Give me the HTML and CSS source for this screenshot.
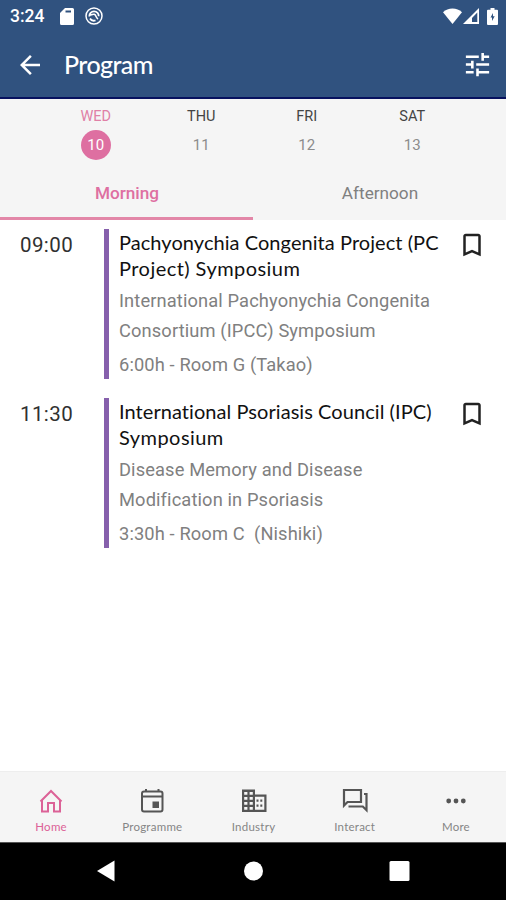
FILE: index.html
```html
<!DOCTYPE html>
<html lang="en">
<head>
    <meta charset="UTF-8">
    <meta name="viewport" content="width=device-width, initial-scale=1.0">
    <title>Program</title>
    <link rel="stylesheet" href="styles.css">
</head>
<body>
    <header class="header">
        <div class="status-bar">
            <span class="status-time">3:24</span>
            <svg width="14" height="17" viewBox="0 0 14 17"><path fill="#fff" fill-rule="evenodd" d="M5 0h7.500q1.500 0 1.500 1.500v14q0 1.500-1.500 1.500h-11q-1.500 0-1.500-1.500V5zM5.500 2.500v2h5.500v-2z"/></svg>
            <svg class="status-sync" width="18" height="18" viewBox="0 0 18 18" fill="none" stroke="#fff"><circle cx="9" cy="9" r="8" stroke-width="1.500"/><path stroke-width="1.800" d="M4.300 9.500C4 6.500 6.500 4.300 9 4.300c3 0 4.900 2.300 4.700 4.900M5 11.500c1.200 2 3.500 2.600 5.500 1.900"/><path stroke-width="1.600" d="M4.500 7.500c2 1.300 3.200-.8 4.800-.2 2 .8 1.200 3.200 3.700 4.700"/></svg>
            <div class="status-right">
                <svg width="19" height="16" viewBox="0 0 19 16"><path fill="#fff" d="M9.500 16L0 4.200Q4 .5 9.500.5T19 4.200z"/></svg>
                <svg width="16" height="16" viewBox="0 0 16 16"><path fill="#fff" fill-rule="evenodd" d="M16 0v16H0zM14.300 4.500L9 10v4h5.300z"/></svg>
                <svg class="status-battery" width="11" height="17" viewBox="0 0 11 17"><path fill="#fff" fill-rule="evenodd" d="M3.500 0h4v1.700H10q1 0 1 1V16q0 1-1 1H1q-1 0-1-1V2.700q0-1 1-1h2.500zM6 5L3.500 9.500H5v3.500l2.700-4.700H6z"/></svg>
            </div>
        </div>
        <div class="toolbar">
            <svg width="30" height="30" viewBox="0 0 24 24"><path fill="#fff" d="M20 11H7.830l5.590-5.590L12 4l-8 8 8 8 1.410-1.410L7.830 13H20v-2z"/></svg>
            <h1 class="title">Program</h1>
            <svg class="filter" width="31" height="31" viewBox="0 0 24 24"><path fill="#fff" d="M3 17v2h6v-2H3zM3 5v2h10V5H3zm10 16v-2h8v-2h-8v-2h-2v6h2zM7 9v2H3v2h4v2h2V9H7zm14 4v-2H11v2h10zm-6-4h2V7h4V5h-4V3h-2v6z"/></svg>
        </div>
    </header>

    <div class="days">
        <div class="day day-active"><span class="day-name">WED</span><span class="day-number">10</span></div>
        <div class="day"><span class="day-name">THU</span><span class="day-number">11</span></div>
        <div class="day"><span class="day-name">FRI</span><span class="day-number">12</span></div>
        <div class="day"><span class="day-name">SAT</span><span class="day-number">13</span></div>
    </div>
    <div class="tabs">
        <div class="tab tab-active">Morning</div>
        <div class="tab">Afternoon</div>
    </div>

    <main class="sessions">
        <div class="session">
            <div class="session-time">09:00</div>
            <div class="session-info">
                <h2 class="session-title">Pachyonychia Congenita Project (PC<br><span class="title-wide">Project) Symposium</span></h2>
                <p class="session-text">International Pachyonychia Congenita<br>Consortium (IPCC) Symposium</p>
                <p class="session-room">6:00h - Room G (Takao)</p>
            </div>
            <svg class="bookmark" width="30" height="30" viewBox="0 0 24 24"><path d="M17 3H7c-1.100 0-1.990.9-1.990 2L5 21l7-3 7 3V5c0-1.100-.9-2-2-2zm0 15l-5-2.180L7 18V5h10v13z"/></svg>
        </div>
        <div class="session">
            <div class="session-time">11:30</div>
            <div class="session-info">
                <h2 class="session-title">International Psoriasis Council (IPC)<br><span class="title-wide">Symposium</span></h2>
                <p class="session-text">Disease Memory and Disease<br>Modification in Psoriasis</p>
                <p class="session-room">3:30h - Room C&nbsp; (Nishiki)</p>
            </div>
            <svg class="bookmark" width="30" height="30" viewBox="0 0 24 24"><path d="M17 3H7c-1.100 0-1.990.9-1.990 2L5 21l7-3 7 3V5c0-1.100-.9-2-2-2zm0 15l-5-2.180L7 18V5h10v13z"/></svg>
        </div>
    </main>

    <nav class="menu">
        <div class="menu-item menu-active">
            <svg width="28" height="28" viewBox="0 0 28 28" fill="none" stroke="currentColor" stroke-width="2"><path d="M3.500 14.500L14 4l10.500 10.500M5 13v11.500h6V16h6v8.500h6V13"/></svg>
            <span>Home</span>
        </div>
        <div class="menu-item">
            <svg width="28" height="28" viewBox="0 0 28 28" fill="none" stroke="currentColor" stroke-width="2"><rect x="4" y="4.500" width="20.500" height="20" rx="2"/><path d="M4 9.500h20.500M8 2v3M20.500 2v3"/><path d="M14.500 14.500H21v6.500h-6.500z" fill="currentColor" stroke="none"/></svg>
            <span>Programme</span>
        </div>
        <div class="menu-item">
            <svg width="28" height="28" viewBox="0 0 28 28" fill="currentColor"><path fill-rule="evenodd" d="M2 2.500h13v5h11.500V25H2zM4.200 5v2.800h3.200V5zM9.600 5v2.800h3.200V5zM4.200 10v2.800h3.200V10zM9.600 10v2.800h3.200V10zM4.200 15v2.800h3.200V15zM9.600 15v2.800h3.200V15zM4.200 20v2.800h3.200V20zM9.600 20v2.800h3.200V20zM15 9.700v13.100h9.300V9.700z"/><path d="M16.500 12.500h2v2.200h-2zM20.300 12.500h2v2.200h-2zM16.500 17.500h2v2.200h-2zM20.300 17.500h2v2.200h-2z"/></svg>
            <span>Industry</span>
        </div>
        <div class="menu-item">
            <svg width="28" height="28" viewBox="0 0 28 28" fill="none" stroke="currentColor" stroke-width="2.200"><path d="M3 3h17v12H6.500L3 18.500z"/><path d="M7.500 19.500h14.300l3.700 3.700V7H23"/></svg>
            <span>Interact</span>
        </div>
        <div class="menu-item">
            <svg width="28" height="28" viewBox="0 0 28 28" fill="currentColor"><circle cx="6.700" cy="14" r="2.400"/><circle cx="14" cy="14" r="2.400"/><circle cx="21.300" cy="14" r="2.400"/></svg>
            <span>More</span>
        </div>
    </nav>
    <div class="system-bar">
        <svg width="506" height="57" viewBox="0 0 506 57" fill="#fff"><path d="M97 28L114.500 17.500v21z"/><circle cx="253.500" cy="28" r="9.500"/><rect x="389.500" y="18" width="20" height="20" rx="1.500"/></svg>
    </div>
</body>
</html>
```
FILE: styles.css
```css
* {
    box-sizing: border-box;
    margin: 0;
    padding: 0;
}

body {
    width: 506px;
    height: 900px;
    display: flex;
    flex-direction: column;
    overflow: hidden;
    background-color: #fff;
    font-family: Roboto, sans-serif;
}

svg {
    display: block;
    flex: none;
}

.header {
    height: 99px;
    background-color: #30527f;
    border-bottom: 2px solid #07125f;
    color: #fff;
}

.status-bar {
    display: flex;
    align-items: center;
    height: 32px;
    padding: 0 8px 0 10px;
}

.status-time {
    width: 50px;
    font-size: 17.5px;
    font-weight: 500;
}

.status-sync {
    margin-left: 11px;
}

.status-right {
    display: flex;
    align-items: center;
    margin-left: auto;
    gap: 1px;
}

.status-battery {
    margin-left: 7px;
}

.toolbar {
    display: flex;
    align-items: center;
    height: 65px;
    padding: 0 13px 0 15px;
}

.title {
    margin-left: 19px;
    padding-bottom: 2px;
    font-family: Lato, sans-serif;
    font-size: 25px;
    font-weight: 500;
    line-height: 30px;
    letter-spacing: -0.6px;
}

.filter {
    margin-left: auto;
}

.days {
    display: flex;
    height: 68px;
    padding: 8px 41px 0 43px;
    background-color: #f5f5f5;
}

.day {
    flex: 1;
    display: flex;
    flex-direction: column;
    align-items: center;
    color: #444;
}

.day-name {
    font-size: 14.5px;
    line-height: 20px;
}

.day-number {
    width: 30px;
    height: 30px;
    margin-top: 3px;
    border-radius: 50%;
    color: #8c8c8c;
    font-size: 15px;
    line-height: 31px;
    text-align: center;
}

.day-active {
    color: #e080a6;
}

.day-active .day-number {
    background-color: #de6fa1;
    color: #fff;
}

.tabs {
    display: flex;
    height: 53px;
    background-color: #f5f5f5;
}

.tab {
    flex: 1;
    padding-left: 1px;
    color: #808080;
    font-size: 17.2px;
    line-height: 53px;
    text-align: center;
}

.tab-active {
    border-bottom: 3px solid #e387a8;
    color: #de6fa1;
    font-weight: 500;
}

.sessions {
    flex: 1;
    padding-top: 9px;
}

.session {
    display: flex;
    height: 150px;
    margin-bottom: 19px;
}

.session-time {
    width: 104px;
    padding-left: 20px;
    color: #303030;
    font-size: 20.5px;
    line-height: 32px;
    letter-spacing: 0.4px;
}

.session-info {
    width: 353px;
    border-left: 5px solid #8660ac;
    padding-left: 10px;
    white-space: nowrap;
}

.session-title {
    color: #111;
    font-family: Lato, sans-serif;
    font-size: 20px;
    font-weight: 400;
    line-height: 26px;
    letter-spacing: 0.06px;
    font-variant-ligatures: none;
}

.title-wide {
    letter-spacing: 0.45px;
}

.session-text {
    margin-top: 5px;
    color: #808080;
    font-size: 18.3px;
    line-height: 29.5px;
    letter-spacing: 0.12px;
}

.session-room {
    margin-top: 5px;
    color: #808080;
    font-size: 18.3px;
    line-height: 30px;
    letter-spacing: 0.12px;
}

.bookmark {
    margin-top: 1px;
    fill: #222;
}

.menu {
    display: flex;
    height: 71px;
    border-top: 1px solid #eee;
    background-color: #f5f5f5;
}

.menu-item {
    flex: 1;
    display: flex;
    flex-direction: column;
    align-items: center;
    padding: 15px 0 0 1px;
    color: #555;
}

.menu-item span {
    margin-top: 4px;
    color: #858585;
    font-family: Lato, sans-serif;
    font-size: 11.5px;
    line-height: 15px;
    letter-spacing: 0.25px;
}

.menu-item.menu-active,
.menu-active span {
    color: #dc6297;
}

.system-bar {
    height: 58px;
    border-top: 1px solid #555;
    background-color: #000;
}
```
